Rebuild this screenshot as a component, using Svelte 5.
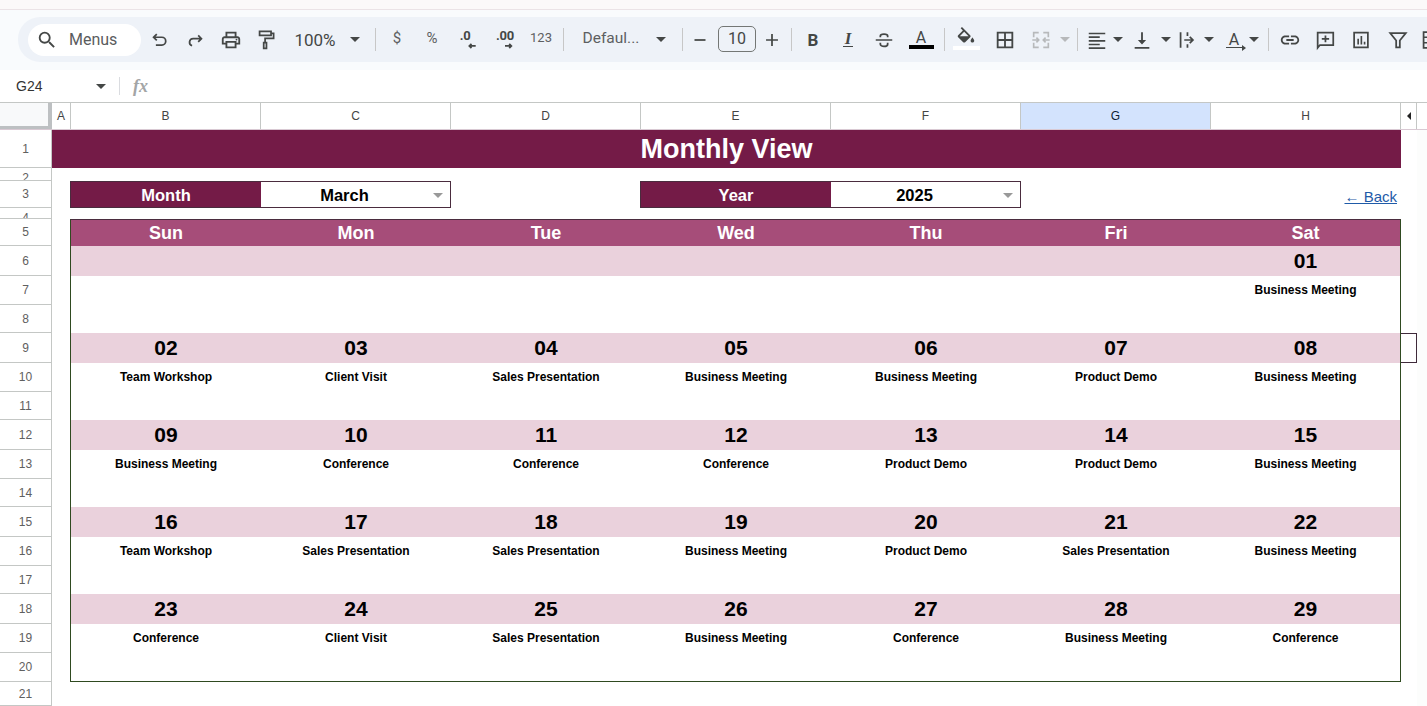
<script>
  const stroke = (d) => `<path d="${d}" fill="none" stroke="currentColor" stroke-width="1.9"/>`;
  const fill = (d) => `<path d="${d}" fill="currentColor"/>`;
  const raw = [
    { c: 160, w: 24, svg: stroke('M8.5 5.5 5 9l3.5 3.5M5 9h9a4.2 4.2 0 0 1 0 8.5H7.5') },
    { c: 195, w: 24, svg: stroke('M15.5 7 19 10.5 15.5 14M19 10.5h-9a4 4 0 0 0-1.2 7.8') },
    { c: 231, w: 24, svg: fill('M19 8h-1V3H6v5H5c-1.66 0-3 1.34-3 3v6h4v4h12v-4h4v-6c0-1.66-1.34-3-3-3zM8 5h8v3H8V5zm8 12v2H8v-4h8v2zm2-2v-2H6v2H4v-4c0-.55.45-1 1-1h14c.55 0 1 .45 1 1v4h-2z') + '<circle cx="18" cy="11.5" r="1" fill="currentColor"/>' },
    { c: 266, w: 24, svg: stroke('M5 2.5h12.5v4.5H5zM17.5 4.8h2.8v5.4H11v4.5M9.5 14.8h3v6.4h-3z') },
    { c: 315, w: 42, text: '100%', cls: 'zoom' },
    { c: 355, w: 10, caret: true },
    { c: 375, w: 1, sep: true },
    { c: 397, w: 20, text: '$', cls: 'small' },
    { c: 432, w: 20, text: '%', cls: 'small' },
    { c: 468, w: 24, text: '.0', cls: 'dec dec-less', arrow: 'M23 19h-9M17 16l-3 3 3 3' },
    { c: 505, w: 24, text: '.00', cls: 'dec', arrow: 'M12 19h9M18 16l3 3-3 3' },
    { c: 541, w: 24, text: '123', cls: 'num' },
    { c: 563, w: 1, sep: true },
    { c: 611, w: 62, text: 'Defaul...', cls: 'font' },
    { c: 661, w: 10, caret: true },
    { c: 682, w: 1, sep: true },
    { c: 700, w: 22, svg: stroke('M6 12h12') },
    { c: 737, w: 38, text: '10', cls: 'size' },
    { c: 772, w: 22, svg: stroke('M12 5.5v13M5.5 12h13') },
    { c: 791, w: 1, sep: true },
    { c: 813, w: 22, text: 'B', cls: 'bold' },
    { c: 848, w: 22, text: 'I', cls: 'italic' },
    { c: 884, w: 24, svg: stroke('M3 12h18M8 9V7.5C8 6 10 5.5 12 5.5s4 .5 4 2V9M16 15v1.500c0 1.500-2 2.500-4 2.500s-4-1-4-2.500V15') },
    { c: 921, w: 25, text: 'A', cls: 'color' },
    { c: 944, w: 1, sep: true },
    { c: 966, w: 27, paint: true },
    { c: 1005, w: 24, svg: fill('M3 3v18h18V3H3zm8 16H5v-6h6v6zm0-8H5V5h6v6zm8 8h-6v-6h6v6zm0-8h-6V5h6v6z') },
    { c: 1041, w: 24, muted: true, svg: '<path d="M9.500 4H4v5M4 15v5h5.500M14.500 4H20v5M20 15v5h-5.500M2.500 12h7M7 9.500 9.500 12 7 14.500M21.500 12h-7M17 9.500 14.500 12l2.500 2.500" fill="none" stroke="currentColor" stroke-width="1.800"/>' },
    { c: 1065, w: 10, caret: true, muted: true },
    { c: 1077, w: 1, sep: true },
    { c: 1097, w: 24, svg: fill('M3 4h18v1.800H3zM3 8h12v1.800H3zM3 12h18v1.800H3zM3 16h12v1.800H3zM3 20h18v1.800H3z') },
    { c: 1118, w: 10, caret: true },
    { c: 1142, w: 24, svg: fill('M16.500 12h-3.500V3.500h-2V12H7.500l4.500 5zM4 19.500v2h16v-2z') },
    { c: 1166, w: 10, caret: true },
    { c: 1187, w: 24, svg: stroke('M5 3.500v17M9 12h10M15 8.500l3.500 3.500-3.500 3.500M12.500 3.500v4M12.500 16.500v4') },
    { c: 1209, w: 10, caret: true },
    { c: 1234, w: 24, text: 'A', cls: 'rotate' },
    { c: 1254, w: 10, caret: true },
    { c: 1268, w: 1, sep: true },
    { c: 1290, w: 24, svg: fill('M3.900 12c0-1.710 1.390-3.100 3.100-3.100h4V7H7c-2.760 0-5 2.240-5 5s2.240 5 5 5h4v-1.900H7c-1.710 0-3.100-1.390-3.100-3.100zM8 13h8v-2H8v2zm9-6h-4v1.900h4c1.710 0 3.100 1.390 3.100 3.100s-1.390 3.100-3.100 3.100h-4V17h4c2.760 0 5-2.240 5-5s-2.240-5-5-5z') },
    { c: 1325, w: 24, svg: stroke('M4 4h17v13.500H6.500L4 20.500zM12.500 7v7.500M8.500 10.700h8') },
    { c: 1361, w: 24, svg: stroke('M4.500 4h15v16h-15z') + fill('M8 10.500h1.800V17H8zM11.500 7.500h1.800V17h-1.800zM15 14h1.800v3H15z') },
    { c: 1398, w: 24, svg: stroke('M3.500 4.500h17L14 12.500V20h-4v-7.500z') },
    { c: 1430, w: 22, svg: stroke('M5 3.500h15v17H5zM5 9h15M5 15h15M11 3.500v17') },
  ];
  let right = 141;
  const tools = raw.map((t) => {
    const m = t.c - t.w / 2 - right;
    right = t.c + t.w / 2;
    return { ...t, m };
  });

  const columns = ['A', 'B', 'C', 'D', 'E', 'F', 'G', 'H'];
  const rowHeights = [38, 13, 27, 11, 27, 30, 29, 28, 30, 29, 28, 30, 29, 28, 30, 29, 28, 30, 29, 29, 24];
  const days = ['Sun', 'Mon', 'Tue', 'Wed', 'Thu', 'Fri', 'Sat'];
  const weeks = [
    [['', ''], ['', ''], ['', ''], ['', ''], ['', ''], ['', ''], ['01', 'Business Meeting']],
    [['02', 'Team Workshop'], ['03', 'Client Visit'], ['04', 'Sales Presentation'], ['05', 'Business Meeting'], ['06', 'Business Meeting'], ['07', 'Product Demo'], ['08', 'Business Meeting']],
    [['09', 'Business Meeting'], ['10', 'Conference'], ['11', 'Conference'], ['12', 'Conference'], ['13', 'Product Demo'], ['14', 'Product Demo'], ['15', 'Business Meeting']],
    [['16', 'Team Workshop'], ['17', 'Sales Presentation'], ['18', 'Sales Presentation'], ['19', 'Business Meeting'], ['20', 'Product Demo'], ['21', 'Sales Presentation'], ['22', 'Business Meeting']],
    [['23', 'Conference'], ['24', 'Client Visit'], ['25', 'Sales Presentation'], ['26', 'Business Meeting'], ['27', 'Conference'], ['28', 'Business Meeting'], ['29', 'Conference']],
  ];
</script>

<div class="app">
  <div class="topstrip"></div>

  <div class="toolbar">
    <div class="pill">
      <div class="search">
        <svg viewBox="0 0 24 24" width="22" height="22"><path fill="currentColor" d="M15.500 14h-.79l-.28-.27A6.471 6.471 0 0 0 16 9.500 6.500 6.500 0 1 0 9.500 16c1.610 0 3.090-.59 4.230-1.570l.27.28v.79l5 4.990L20.490 19l-4.990-5zm-6 0C7.010 14 5 11.990 5 9.500S7.010 5 9.500 5 14 7.010 14 9.500 11.990 14 9.500 14z"/></svg>
        <span>Menus</span>
      </div>
      {#each tools as t}
        <div class="tool" class:muted={t.muted} style="margin-left:{t.m}px;width:{t.w}px">
          {#if t.sep}
            <i class="sep"></i>
          {:else if t.caret}
            <i class="caret"></i>
          {:else if t.paint}
            <div class="paint">
              <svg viewBox="0 0 24 24" width="22" height="22"><path fill="currentColor" d="M16.560 8.940 7.620 0 6.210 1.410l2.380 2.380-5.150 5.150c-.59.590-.59 1.540 0 2.120l5.500 5.500c.29.290.68.44 1.060.44s.77-.15 1.060-.44l5.500-5.500c.59-.58.59-1.530 0-2.120zM5.210 10 10 5.210 14.790 10H5.210zM19 11.500s-2 2.170-2 3.500c0 1.100.9 2 2 2s2-.9 2-2c0-1.330-2-3.500-2-3.500z"/></svg>
              <i class="paintbar"></i>
            </div>
          {:else if t.text}
            <span class={t.cls}>{t.text}</span>
            {#if t.arrow}
              <svg class="decarrow" viewBox="0 0 24 24" width="24" height="24"><path d={t.arrow} fill="none" stroke="currentColor" stroke-width="2.600"/></svg>
            {/if}
          {:else}
            <svg viewBox="0 0 24 24" width="22" height="22">{@html t.svg}</svg>
          {/if}
        </div>
      {/each}
    </div>
  </div>

  <div class="formula">
    <span class="ref">G24</span>
    <i class="caret fcaret"></i>
    <i class="fsep"></i>
    <span class="fx">fx</span>
  </div>

  <div class="colheads">
    <div class="corner"></div>
    {#each columns as c}
      <div class="colhead" class:narrow={c === 'A'} class:active={c === 'G'}>{c}</div>
    {/each}
    <div class="colextra"><i class="lefttri"></i></div>
  </div>

  <div class="sheet">
    <div class="rowheads">
      {#each rowHeights as h, i}
        <div class="rowhead" class:short={h < 20} style="height:{h}px">{i + 1}</div>
      {/each}
    </div>
    <div class="main">
      <div class="title">Monthly View</div>
      <div class="controls">
        <div class="control">
          <div class="label">Month</div>
          <div class="value">March<i class="selcaret"></i></div>
        </div>
        <div class="control year">
          <div class="label">Year</div>
          <div class="value">2025<i class="selcaret"></i></div>
        </div>
        <span class="back">← Back</span>
      </div>
      <div class="calendar">
        <div class="week-grid dayhead">
          {#each days as d}<div>{d}</div>{/each}
        </div>
        {#each weeks as week}
          <div class="week-grid dates">
            {#each week as cell}<div>{cell[0]}</div>{/each}
          </div>
          <div class="week-grid events">
            {#each week as cell}<div>{cell[1]}</div>{/each}
          </div>
        {/each}
      </div>
      <div class="selection"></div>
    </div>
    <div class="sidestrip"></div>
  </div>
</div>

<style>
  :global(body) {
    margin: 0;
    background: #fff;
  }
  .app {
    width: 1427px;
    height: 706px;
    overflow: hidden;
    display: flex;
    flex-direction: column;
    font-family: "Liberation Sans", Arial, sans-serif;
    background: #fff;
  }
  .topstrip {
    height: 9px;
    background: #fbf9f9;
    border-bottom: 1px solid #ebe3e6;
    flex: none;
  }
  .toolbar {
    height: 60px;
    flex: none;
    box-sizing: border-box;
    padding: 7px 0 8px 18px;
    background: #f9fbfd;
    overflow: hidden;
  }
  .pill {
    height: 45px;
    width: 1500px;
    box-sizing: border-box;
    padding-left: 10px;
    border-radius: 22px 0 0 22px;
    background: #eef2f8;
    display: flex;
    align-items: center;
    color: #444746;
  }
  .search {
    width: 113px;
    height: 32px;
    flex: none;
    box-sizing: border-box;
    padding-left: 8px;
    border-radius: 16px;
    background: #fff;
    display: flex;
    align-items: center;
    gap: 11px;
    font: 16px Roboto, sans-serif;
    color: #5a5c5e;
  }
  .search svg {
    color: #444746;
  }
  .tool {
    flex: none;
    height: 32px;
    position: relative;
    display: flex;
    align-items: center;
    justify-content: center;
    white-space: nowrap;
    font-family: Roboto, sans-serif;
  }
  .tool.muted {
    color: #b7b9bb;
  }
  .sep {
    width: 1px;
    height: 23px;
    background: #c7c7c7;
  }
  .caret {
    width: 0;
    height: 0;
    border-left: 5px solid transparent;
    border-right: 5px solid transparent;
    border-top: 5px solid currentColor;
    display: block;
  }
  .zoom {
    font-size: 17px;
  }
  .small {
    font-size: 15px;
    color: #5d5f61;
    margin-top: -4px;
  }
  .dec {
    font-size: 13px;
    font-weight: 700;
    margin-top: -8px;
    letter-spacing: -0.3px;
  }
  .dec-less {
    margin-left: -6px;
  }
  .decarrow {
    position: absolute;
    left: 0;
    top: 5px;
    transform: scale(0.7);
  }
  .num {
    font-size: 13px;
    color: #5d5f61;
    margin-top: -4px;
  }
  .font {
    font-size: 15.5px;
    color: #5d5f61;
    margin-top: -4px;
  }
  .size {
    width: 38px;
    height: 26px;
    box-sizing: border-box;
    border: 1px solid #747775;
    border-radius: 5px;
    font-size: 16px;
    line-height: 24px;
    text-align: center;
    margin-top: -1px;
  }
  .bold {
    font-size: 17px;
    font-weight: 700;
  }
  .italic {
    font-size: 17px;
    font-weight: 700;
    font-style: italic;
    font-family: "Liberation Serif", serif;
    border-bottom: 1.500px solid currentColor;
    line-height: 14px;
    padding: 0 2px;
  }
  .color {
    font-size: 16px;
    line-height: 15px;
    width: 25px;
    text-align: center;
    border-bottom: 4px solid #000;
    margin-top: -1px;
  }
  .rotate {
    font-size: 16px;
    line-height: 15px;
    border-bottom: 1.500px solid currentColor;
    padding: 0 3px;
    position: relative;
  }
  .rotate::after {
    content: "";
    position: absolute;
    right: -4px;
    bottom: -4px;
    width: 0;
    height: 0;
    border-top: 3px solid transparent;
    border-bottom: 3px solid transparent;
    border-left: 4px solid currentColor;
  }
  .paint {
    width: 27px;
    display: flex;
    flex-direction: column;
    align-items: center;
    margin-top: -2px;
  }
  .paintbar {
    width: 27px;
    height: 4px;
    background: #fff;
    margin-top: -3px;
  }
  .formula {
    height: 32px;
    flex: none;
    box-sizing: border-box;
    display: flex;
    align-items: center;
    padding-left: 16px;
    background: #fff;
    color: #444746;
  }
  .ref {
    font: 14px "Liberation Sans", sans-serif;
    width: 80px;
    color: #333;
  }
  .fsep {
    width: 1px;
    height: 18px;
    background: #dadce0;
    margin-left: 13px;
  }
  .fx {
    font: italic 700 18px "Liberation Serif", serif;
    color: #a3a5a6;
    margin-left: 13px;
  }
  .colheads {
    height: 28px;
    flex: none;
    box-sizing: border-box;
    border-top: 1px solid #c4c7c5;
    border-bottom: 1px solid #d9c9d3;
    display: flex;
    background: #fff;
  }
  .corner {
    width: 48px;
    height: 26px;
    box-sizing: border-box;
    flex: none;
    background: #f8f9fa;
    border-bottom: 3px solid #bdc0c2;
    margin-right: 4px;
    box-shadow: 4px 0 0 #bdc0c2;
  }
  .colhead {
    width: 190px;
    flex: none;
    box-sizing: border-box;
    border-right: 1px solid #c4c7c5;
    display: flex;
    align-items: center;
    justify-content: center;
    font-size: 12px;
    color: #444;
  }
  .colhead.narrow {
    width: 19px;
  }
  .colhead.active {
    background: #d3e3fd;
    color: #0b1d33;
  }
  .colextra {
    width: 16px;
    flex: none;
    box-sizing: border-box;
    border-right: 1px solid #c4c7c5;
    display: flex;
    align-items: center;
    justify-content: center;
  }
  .lefttri {
    width: 0;
    height: 0;
    border-top: 4px solid transparent;
    border-bottom: 4px solid transparent;
    border-right: 4px solid #222;
  }
  .sheet {
    flex: 1;
    display: flex;
    min-height: 0;
  }
  .rowheads {
    width: 52px;
    flex: none;
    box-sizing: border-box;
    border-right: 1px solid #c4c7c5;
  }
  .rowhead {
    box-sizing: border-box;
    border-bottom: 1px solid #c4c7c5;
    overflow: hidden;
    display: flex;
    align-items: center;
    justify-content: center;
    font-size: 12px;
    color: #5f6060;
  }
  .rowhead.short {
    align-items: flex-start;
    padding-top: 3px;
    line-height: 14px;
  }
  .main {
    width: 1349px;
    flex: none;
    position: relative;
  }
  .title {
    height: 38px;
    background: #741b47;
    color: #fff;
    font-size: 27px;
    font-weight: 700;
    display: flex;
    align-items: center;
    justify-content: center;
  }
  .controls {
    margin: 13px 0 11px;
    padding-left: 18px;
    height: 27px;
    display: flex;
    align-items: center;
    position: relative;
  }
  .control {
    display: flex;
    width: 381px;
    height: 27px;
    box-sizing: border-box;
    border: 1px solid #4a2c3e;
    font-size: 16.5px;
    font-weight: 700;
    flex: none;
  }
  .control.year {
    margin-left: 189px;
  }
  .label {
    width: 190px;
    flex: none;
    background: #741b47;
    color: #fff;
    display: flex;
    align-items: center;
    justify-content: center;
    padding-top: 1px;
    box-sizing: border-box;
  }
  .value {
    flex: 1;
    position: relative;
    color: #000;
    display: flex;
    align-items: center;
    justify-content: center;
    padding: 1px 22px 0 0;
  }
  .selcaret {
    position: absolute;
    right: 7px;
    top: 11px;
    width: 0;
    height: 0;
    border-left: 5px solid transparent;
    border-right: 5px solid transparent;
    border-top: 5px solid #999;
  }
  .back {
    margin-left: auto;
    margin-right: 4px;
    color: #1f5ba8;
    font-size: 15px;
    text-decoration: underline;
    padding-top: 4px;
  }
  .calendar {
    margin-left: 18px;
    width: 1331px;
    height: 463px;
    box-sizing: border-box;
    border: 1px solid #2f4a20;
    border-top-color: #4a2c3e;
  }
  .week-grid {
    display: grid;
    grid-template-columns: repeat(6, 190px) 189px;
    text-align: center;
  }
  .dayhead {
    height: 26px;
    background: #a64d79;
    color: #fff;
    font-size: 18px;
    font-weight: 700;
    line-height: 26px;
  }
  .dates {
    height: 30px;
    background: #ead1dc;
    color: #000;
    font-size: 21px;
    font-weight: 700;
    line-height: 30px;
  }
  .events {
    height: 57px;
    font-size: 12px;
    font-weight: 700;
    color: #000;
    line-height: 29px;
  }
  .selection {
    position: absolute;
    left: 1349px;
    top: 203px;
    width: 16px;
    height: 30px;
    box-sizing: border-box;
    border: 1px solid #3f2a3a;
    border-left: 0;
  }
  .sidestrip {
    flex: 1;
    margin-left: 16px;
    background: #fcfdfc;
  }
</style>
